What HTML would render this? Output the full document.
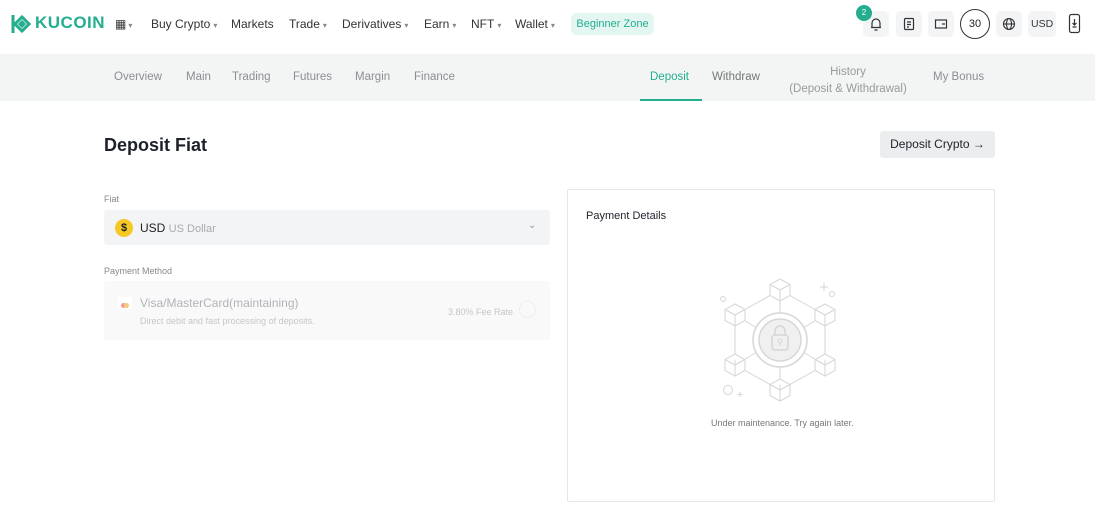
<!DOCTYPE html>
<html><head><meta charset="utf-8"><style>
*{margin:0;padding:0;box-sizing:border-box}
body{width:1095px;height:515px;overflow:hidden;background:#fff;font-family:"Liberation Sans",sans-serif;position:relative;color:#1d2129}
.a{position:absolute;white-space:nowrap}
.nav{font-size:12px;color:#333;top:17px}
.car{font-size:8px;color:#888;margin-left:3px}
.sub{font-size:11.5px;color:#8a8f96;top:71px}
.ib{position:absolute;top:11px;width:26px;height:26px;border-radius:5px;background:#f3f4f5}
</style></head><body>
<svg class="a" style="left:10px;top:13px" width="22" height="22" viewBox="0 0 22 22"><path d="M3 2v18M5 11l7-7 7 7-7 7zM10 11l2-2 2 2-2 2z" fill="none" stroke="#24ae8f" stroke-width="3"/></svg>
<div class="a" style="left:35px;top:13px;font-size:17px;font-weight:bold;color:#24ae8f;letter-spacing:0.5px">KUCOIN</div>
<div class="a" style="left:115px;top:17px;font-size:12px;color:#333;letter-spacing:-1px">▦<span class="car">▾</span></div>
<div class="a nav" style="left:151px">Buy Crypto<span class="car">▾</span></div>
<div class="a nav" style="left:231px">Markets</div>
<div class="a nav" style="left:289px">Trade<span class="car">▾</span></div>
<div class="a nav" style="left:342px">Derivatives<span class="car">▾</span></div>
<div class="a nav" style="left:424px">Earn<span class="car">▾</span></div>
<div class="a nav" style="left:471px">NFT<span class="car">▾</span></div>
<div class="a nav" style="left:515px">Wallet<span class="car">▾</span></div>
<div class="a" style="left:571px;top:13px;width:83px;height:22px;border-radius:6px;background:#e4f6f1;color:#24ae8f;font-size:11px;line-height:22px;text-align:center">Beginner Zone</div>
<div class="ib" style="left:863px"></div>
<div class="a" style="left:856px;top:5px;width:16px;height:16px;border-radius:50%;background:#24ae8f;color:#fff;font-size:8px;text-align:center;line-height:16px">2</div>
<svg class="a" style="left:868px;top:16px" width="16" height="16" viewBox="0 0 16 16" fill="none" stroke="#333" stroke-width="1.2"><path d="M4 11V7a4 4 0 018 0v4M3 11.5h10M6.5 14h3"/></svg>
<div class="ib" style="left:896px"></div>
<svg class="a" style="left:902px;top:17px" width="14" height="14" fill="none" stroke="#333" stroke-width="1.2"><rect x="2.5" y="1.5" width="9" height="11" rx="1"/><path d="M5 5h4M5 7.5h4M5 10h2"/></svg>
<div class="ib" style="left:928px"></div>
<svg class="a" style="left:934px;top:17px" width="14" height="14" fill="none" stroke="#333" stroke-width="1.2"><rect x="1.5" y="3" width="11" height="8"/><path d="M8 7h3"/></svg>
<div class="a" style="left:960px;top:9px;width:30px;height:30px;border-radius:50%;border:1.3px solid #333;font-size:11px;text-align:center;line-height:28px">30</div>
<div class="ib" style="left:996px"></div>
<svg class="a" style="left:1002px;top:17px" width="14" height="14" fill="none" stroke="#333" stroke-width="1.1"><circle cx="7" cy="7" r="5.5"/><ellipse cx="7" cy="7" rx="2.5" ry="5.5"/><path d="M1.5 7h11"/></svg>
<div class="ib" style="left:1028px;width:28px"></div>
<div class="a" style="left:1031px;top:18px;font-size:10.5px;color:#333">USD</div>
<svg class="a" style="left:1068px;top:13px" width="14" height="22" fill="none" stroke="#333" stroke-width="1.2"><rect x="1.5" y="1.5" width="10" height="18" rx="2"/><path d="M6.5 6v6M4.5 10l2 2 2-2M4.5 14h4"/></svg>
<div class="a" style="left:0;top:54px;width:1095px;height:47px;background:#f3f5f4"></div>
<div class="a sub" style="left:114px">Overview</div>
<div class="a sub" style="left:186px">Main</div>
<div class="a sub" style="left:232px">Trading</div>
<div class="a sub" style="left:293px">Futures</div>
<div class="a sub" style="left:355px">Margin</div>
<div class="a sub" style="left:414px">Finance</div>
<div class="a sub" style="left:650px;color:#24ae8f">Deposit</div>
<div class="a" style="left:640px;top:99px;width:62px;height:2px;background:#24ae8f"></div>
<div class="a sub" style="left:712px;color:#777">Withdraw</div>
<div class="a sub" style="left:785px;top:64px;width:126px;text-align:center;color:#999;line-height:17px">History<br>(Deposit &amp; Withdrawal)</div>
<div class="a sub" style="left:933px">My Bonus</div>
<div class="a" style="left:104px;top:135px;font-size:18px;font-weight:bold;color:#1d2129">Deposit Fiat</div>
<div class="a" style="left:880px;top:131px;width:115px;height:27px;background:#ebedef;border-radius:3px;font-size:12px;line-height:27px;text-align:center;color:#1d2129">Deposit Crypto <b>→</b></div>
<div class="a" style="left:104px;top:194px;font-size:9px;color:#888">Fiat</div>
<div class="a" style="left:104px;top:210px;width:446px;height:35px;background:#f3f4f6;border-radius:3px"></div>
<div class="a" style="left:115px;top:219px;width:18px;height:18px;border-radius:50%;background:#f5c826;font-size:11px;font-weight:bold;text-align:center;line-height:18px;color:#222">$</div>
<div class="a" style="left:140px;top:221px;font-size:12px;color:#222">USD <span style="font-size:11px;color:#aaa">US Dollar</span></div>
<div class="a" style="left:528px;top:220px;font-size:10px;color:#999">⌄</div>
<div class="a" style="left:104px;top:266px;font-size:9px;color:#888">Payment Method</div>
<div class="a" style="left:104px;top:281px;width:446px;height:59px;background:#f9f9fa;border-radius:3px"></div>
<div class="a" style="left:118px;top:297px;width:14px;height:12px;background:#fff"></div>
<div class="a" style="left:121px;top:303px;width:5px;height:5px;border-radius:50%;background:#f19a9a"></div>
<div class="a" style="left:124px;top:303px;width:5px;height:5px;border-radius:50%;background:#f5c97a"></div>
<div class="a" style="left:140px;top:296px;font-size:12px;color:#b0b3b8">Visa/MasterCard(maintaining)</div>
<div class="a" style="left:140px;top:316px;font-size:9px;color:#c4c6ca">Direct debit and fast processing of deposits.</div>
<div class="a" style="left:448px;top:307px;font-size:9px;color:#c4c6ca">3.80% Fee Rate</div>
<div class="a" style="left:519px;top:301px;width:17px;height:17px;border-radius:50%;border:1px solid #eee"></div>
<div class="a" style="left:567px;top:189px;width:428px;height:313px;border:1px solid #e5e6e8;border-radius:2px"></div>
<div class="a" style="left:586px;top:210px;font-size:11px;color:#1d2129">Payment Details</div>
<svg class="a" style="left:700px;top:270px" width="160" height="140" viewBox="700 270 160 140" fill="none" stroke="#d6d6d6" stroke-width="1">
<defs><g id="c"><path d="M0-11L10-5.5V5.5L0 11L-10 5.5V-5.5Z M-10-5.5L0 0L10-5.5 M0 0V11"/></g></defs>
<path d="M780 290L825 315V365L780 390L735 365V315Z"/>
<path d="M780 290V313M735 315L757 328M825 315L803 328M735 365L757 352M825 365L803 352M780 390V367"/>
<use href="#c" x="780" y="290" fill="#fff"/><use href="#c" x="735" y="315" fill="#fff"/><use href="#c" x="825" y="315" fill="#fff"/>
<use href="#c" x="735" y="365" fill="#fff"/><use href="#c" x="825" y="365" fill="#fff"/><use href="#c" x="780" y="390" fill="#fff"/>
<circle cx="780" cy="340" r="27" fill="#fff" stroke-width="1.5"/><circle cx="780" cy="340" r="21" fill="#f0f0f0" stroke-width="1.5"/>
<rect x="772" y="335" width="16" height="15" rx="3" stroke-width="1.5" fill="#f0f0f0"/><path d="M775 335v-4a5 5 0 0110 0v4" stroke-width="1.5"/>
<circle cx="780" cy="341" r="2"/><path d="M780 343v3"/>
<circle cx="723" cy="299" r="2.5"/><circle cx="832" cy="294" r="2.5"/><path d="M824 283v8M820 287h8"/>
<circle cx="728" cy="390" r="4.5"/><path d="M740 392v5M737.5 394.5h5"/>
</svg>
<div class="a" style="left:711px;top:418px;font-size:9px;color:#777">Under maintenance. Try again later.</div>
</body></html>
